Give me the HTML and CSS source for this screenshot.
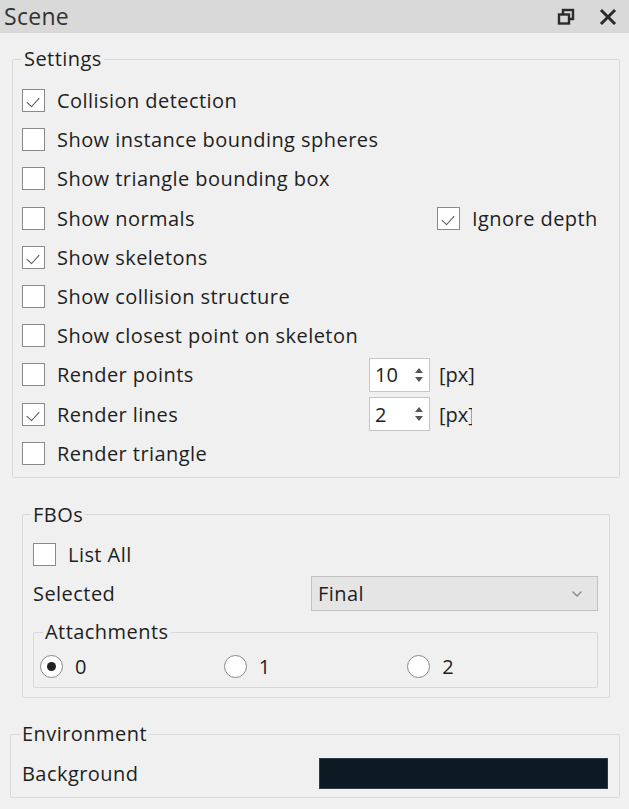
FILE: index.html
```html
<!DOCTYPE html>
<html>
<head>
<meta charset="utf-8">
<link rel="stylesheet" href="styles.css">
</head>
<body>
<div class="window">
  <div class="titlebar">
    <span class="title">Scene</span>
    <div class="tb-icons">
      <svg class="tb-icon" width="18" height="18" viewBox="0 0 18 18">
        <rect x="6" y="2" width="10" height="9" fill="none" stroke="#2b2b2b" stroke-width="2.4"/>
        <rect x="2" y="6.5" width="10" height="9" fill="#d9d9d9" stroke="#2b2b2b" stroke-width="2.4"/>
      </svg>
      <svg class="tb-icon" width="18" height="18" viewBox="0 0 18 18">
        <path d="M3 3 L15 15 M15 3 L3 15" stroke="#2b2b2b" stroke-width="3" stroke-linecap="square"/>
      </svg>
    </div>
  </div>

  <div class="content">
    <fieldset class="group settings">
      <legend>Settings</legend>
      <div class="row"><span class="cb checked"></span><span class="lbl">Collision detection</span></div>
      <div class="row"><span class="cb"></span><span class="lbl">Show instance bounding spheres</span></div>
      <div class="row"><span class="cb"></span><span class="lbl">Show triangle bounding box</span></div>
      <div class="row">
        <div class="left wide"><span class="cb"></span><span class="lbl">Show normals</span></div>
        <span class="cb checked"></span><span class="lbl">Ignore depth</span>
      </div>
      <div class="row"><span class="cb checked"></span><span class="lbl">Show skeletons</span></div>
      <div class="row"><span class="cb"></span><span class="lbl">Show collision structure</span></div>
      <div class="row"><span class="cb"></span><span class="lbl">Show closest point on skeleton</span></div>
      <div class="row">
        <div class="left mid"><span class="cb"></span><span class="lbl">Render points</span></div>
        <div class="spin"><span class="spin-val">10</span><span class="spin-arrows"><span class="up"></span><span class="down"></span></span></div>
        <span class="unit">[px]</span>
      </div>
      <div class="row">
        <div class="left mid"><span class="cb checked"></span><span class="lbl">Render lines</span></div>
        <div class="spin"><span class="spin-val">2</span><span class="spin-arrows"><span class="up"></span><span class="down"></span></span></div>
        <span class="unit clip">[px]</span>
      </div>
      <div class="row"><span class="cb"></span><span class="lbl">Render triangle</span></div>
    </fieldset>

    <fieldset class="group fbos">
      <legend>FBOs</legend>
      <div class="row"><span class="cb"></span><span class="lbl">List All</span></div>
      <div class="row">
        <div class="left sel">Selected</div>
        <div class="combo"><span>Final</span>
          <svg width="12" height="8" viewBox="0 0 12 8"><path d="M1.5 1.5 L6 6 L10.5 1.5" fill="none" stroke="#888" stroke-width="1.3"/></svg>
        </div>
      </div>
      <fieldset class="group attach">
        <legend>Attachments</legend>
        <div class="radios">
          <div class="radio-item"><span class="rb on"></span><span class="lbl">0</span></div>
          <div class="radio-item"><span class="rb"></span><span class="lbl">1</span></div>
          <div class="radio-item"><span class="rb"></span><span class="lbl">2</span></div>
        </div>
      </fieldset>
    </fieldset>

    <fieldset class="group env">
      <legend>Environment</legend>
      <div class="row env-row">
        <div class="left bg">Background</div>
        <div class="swatch"></div>
      </div>
    </fieldset>
  </div>
</div>
</body>
</html>
```

FILE: styles.css
```css
* { box-sizing: border-box; }
html, body {
  margin: 0;
  padding: 0;
  background: #f0f0f0;
}
body {
  font-family: "Open Sans", "Noto Sans", "Liberation Sans", sans-serif;
  font-size: 20px;
  letter-spacing: 0.45px;
  color: #1e1e1e;
  width: 629px;
  height: 809px;
  overflow: hidden;
}
.window {
  width: 629px;
  height: 809px;
}
.titlebar {
  height: 33px;
  background: #d9d9d9;
  display: flex;
  align-items: center;
  justify-content: space-between;
  padding: 0 12px 0 4px;
}
.title {
  font-size: 23px;
  letter-spacing: 0.3px;
  color: #333;
  line-height: 33px;
}
.tb-icons {
  display: flex;
  gap: 24px;
  align-items: center;
}
.tb-icon { display: block; }

.content {
  padding-top: 14px;
  display: flex;
  flex-direction: column;
}
.group {
  margin: 0;
  border: 1px solid #d9d9d9;
  border-radius: 2px;
  min-width: 0;
}
.group > legend {
  line-height: 24px;
  height: 24px;
  padding: 0 2px;
  margin-left: -2px;
}
.settings {
  margin-left: 12px;
  width: 608px;
  padding: 10px 9px 4px 9px;
}
.settings > legend { margin-left: 0; }
.row {
  height: 39.2px;
  display: flex;
  align-items: center;
}
.left { display: flex; align-items: center; }
.left.wide { width: 415px; }
.left.mid { width: 347px; }
.cb {
  width: 23px;
  height: 23px;
  border: 1.5px solid #8a8a8a;
  background: #fff;
  flex: none;
  margin-right: 12px;
  position: relative;
}
.cb.checked::after {
  content: "";
  position: absolute;
  left: 4px;
  top: 2px;
  width: 11px;
  height: 6px;
  border-left: 1.5px solid #555;
  border-bottom: 1.5px solid #555;
  transform: translate(0, 5px) rotate(-48deg);
}
.lbl { white-space: nowrap; }

.spin {
  width: 61px;
  height: 34px;
  background: #fff;
  border: 1px solid #c6c6c6;
  display: flex;
  align-items: center;
  justify-content: space-between;
  padding: 0 5px 0 5px;
  letter-spacing: 0;
}
.spin-arrows {
  display: flex;
  flex-direction: column;
  gap: 4px;
  align-items: center;
  width: 10px;
}
.spin-arrows .up {
  width: 0; height: 0;
  border-left: 4px solid transparent;
  border-right: 4px solid transparent;
  border-bottom: 5px solid #555;
}
.spin-arrows .down {
  width: 0; height: 0;
  border-left: 4px solid transparent;
  border-right: 4px solid transparent;
  border-top: 5px solid #555;
}
.unit {
  margin-left: 9px;
  white-space: nowrap;
  letter-spacing: 0;
}
.unit.clip {
  width: 33px;
  overflow: hidden;
}

.fbos {
  margin: 25px 0 0 22px;
  width: 588px;
  padding: 8px 11px 9px 10px;
}
.left.sel { width: 278px; }
.combo {
  width: 287px;
  height: 35px;
  background: #e5e5e5;
  border: 1px solid #c2c2c2;
  display: flex;
  align-items: center;
  justify-content: space-between;
  padding: 0 14px 0 6px;
}
.attach {
  margin: 7px 0 0 0;
  width: 565px;
  padding: 5px 6px 4px 6px;
}
.attach > legend { margin-left: 3px; }
.radios {
  display: flex;
  height: 34px;
  align-items: center;
}
.radio-item {
  width: 186px;
  display: flex;
  align-items: center;
}
.rb {
  width: 23px;
  height: 23px;
  border-radius: 50%;
  border: 1.5px solid #8a8a8a;
  background: #fff;
  margin-right: 12px;
  flex: none;
  display: flex;
  align-items: center;
  justify-content: center;
}
.rb.on::after {
  content: "";
  width: 9px;
  height: 9px;
  border-radius: 50%;
  background: #222;
}

.env {
  margin: 24px 0 0 10px;
  width: 610px;
  padding: 10px 11px 7px 11px;
}
.env-row { height: 34px; }
.left.bg { flex: 1; }
.swatch {
  width: 289px;
  height: 31px;
  background: #0c1a23;
  border: 1px solid #2b3a44;
  flex: none;
}
```
